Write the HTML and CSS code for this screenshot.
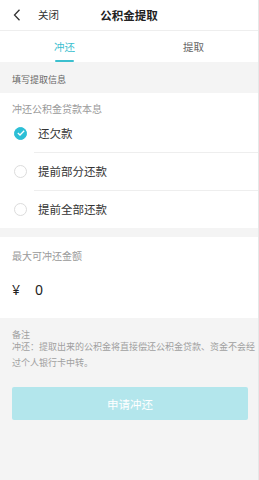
FILE: index.html
```html
<!DOCTYPE html>
<html lang="zh-CN">
<head>
<meta charset="utf-8">
<link rel="stylesheet" href="styles.css">
</head>
<body>
<div class="page">
  <header class="topbar">
    <div class="left">
      <svg class="back" width="8" height="12" viewBox="0 0 8 12"><polyline points="6.5,0.8 1.5,6 6.5,11.2" fill="none" stroke="#333" stroke-width="1.3"/></svg>
      <span class="close">关闭</span>
    </div>
    <div class="title">公积金提取</div>
    <div></div>
  </header>
  <nav class="tabs">
    <div class="tab active"><span>冲还</span></div>
    <div class="tab"><span>提取</span></div>
  </nav>
  <div class="section-label">填写提取信息</div>
  <section class="card options">
    <div class="card-label">冲还公积金贷款本息</div>
    <div class="option">
      <span class="radio checked"><svg width="8" height="6" viewBox="0 0 8 6"><polyline points="0.8,3 3,5 7.2,0.8" fill="none" stroke="#fff" stroke-width="1.3"/></svg></span>
      <span class="opt-text">还欠款</span>
    </div>
    <div class="option divided">
      <span class="radio"></span>
      <span class="opt-text">提前部分还款</span>
    </div>
    <div class="option divided">
      <span class="radio"></span>
      <span class="opt-text">提前全部还款</span>
    </div>
  </section>
  <section class="card amount-card">
    <div class="card-label">最大可冲还金额</div>
    <div class="amount"><span class="yen">¥</span><span class="num">0</span></div>
  </section>
  <div class="note">
    <div class="note-title">备注</div>
    <p class="note-text">冲还：提取出来的公积金将直接偿还公积金贷款、资金不会经过个人银行卡中转。</p>
  </div>
  <button class="submit">申请冲还</button>
</div>
</body>
</html>
```

FILE: styles.css
```css
* { box-sizing: border-box; margin: 0; padding: 0; }
html, body { width: 259px; height: 480px; }
body {
  background: #f4f4f4;
  font-family: "Noto Sans CJK SC", "Noto Sans", sans-serif;
  color: #333;
  overflow: hidden;
}
.page {
  width: 259px;
  min-height: 480px;
  border-right: 1px solid #e6e6e6;
  background: #f4f4f4;
}
.topbar {
  height: 31px;
  background: #fff;
  border-bottom: 1px solid #eeeeee;
  display: grid;
  grid-template-columns: 1fr auto 1fr;
  align-items: center;
}
.left { display: flex; align-items: center; padding-left: 13px; }
.back { display: block; }
.close { margin-left: 17px; font-size: 10.5px; line-height: 14px; color: #333; }
.title { font-size: 11.5px; font-weight: 700; color: #222; line-height: 14px; }
.tabs {
  height: 31px;
  background: #fff;
  display: flex;
}
.tab {
  flex: 1;
  display: flex;
  justify-content: center;
  padding-top: 9px;
  font-size: 10.5px;
  color: #666;
}
.tab span { line-height: 14px; height: 22px; position: relative; }
.tab.active span { color: #3cc0cf; }
.tab.active span::after {
  content: "";
  position: absolute;
  left: 1px;
  right: 1px;
  bottom: 0;
  height: 2px;
  background: #3cc0cf;
  border-radius: 1px;
}
.section-label {
  height: 30px;
  padding: 12px 0 0 12px;
  font-size: 9px;
  line-height: 12px;
  color: #666;
}
.card { background: #fff; }
.options { padding-top: 10px; margin-top: 1px; }
.card-label {
  padding-left: 12px;
  font-size: 10px;
  line-height: 11px;
  color: #9a9a9a;
}
.option {
  height: 38px;
  display: flex;
  align-items: center;
  padding-left: 14px;
  margin-left: 0;
  position: relative;
}
.option.divided::before {
  content: "";
  position: absolute;
  top: 0;
  left: 34px;
  right: 0;
  height: 1px;
  background: #eeeeee;
}
.radio {
  width: 13px;
  height: 13px;
  border-radius: 50%;
  border: 1px solid #dcdcdc;
  display: flex;
  align-items: center;
  justify-content: center;
  flex: none;
}
.radio.checked { background: #2cbfd6; border-color: #2cbfd6; }
.radio svg { display: block; }
.opt-text { margin-left: 11px; font-size: 11.5px; line-height: 14px; color: #333; }
.amount-card {
  margin-top: 9px;
  padding: 13px 0 19px;
  height: 81px;
}
.amount-card .card-label { line-height: 12px; }
.amount {
  margin-top: 17px;
  height: 20px;
  display: flex;
  align-items: center;
  padding-left: 12px;
  font-family: "Noto Sans", "Roboto", sans-serif;
  font-size: 14px;
  color: #222;
}
.num { margin-left: 15px; }
.note { padding: 11px 0 0 12px; }
.note-title { font-size: 9px; line-height: 12px; color: #a0a0a0; }
.note-text {
  margin-top: -2px;
  font-size: 9px;
  line-height: 16px;
  color: #a0a0a0;
}
.submit {
  display: block;
  margin: 16px 0 0 12px;
  width: 236px;
  height: 33px;
  border: none;
  border-radius: 2px;
  background: #b3e6ec;
  color: #fff;
  font-family: "Noto Sans CJK SC", sans-serif;
  font-size: 11.5px;
}
```
